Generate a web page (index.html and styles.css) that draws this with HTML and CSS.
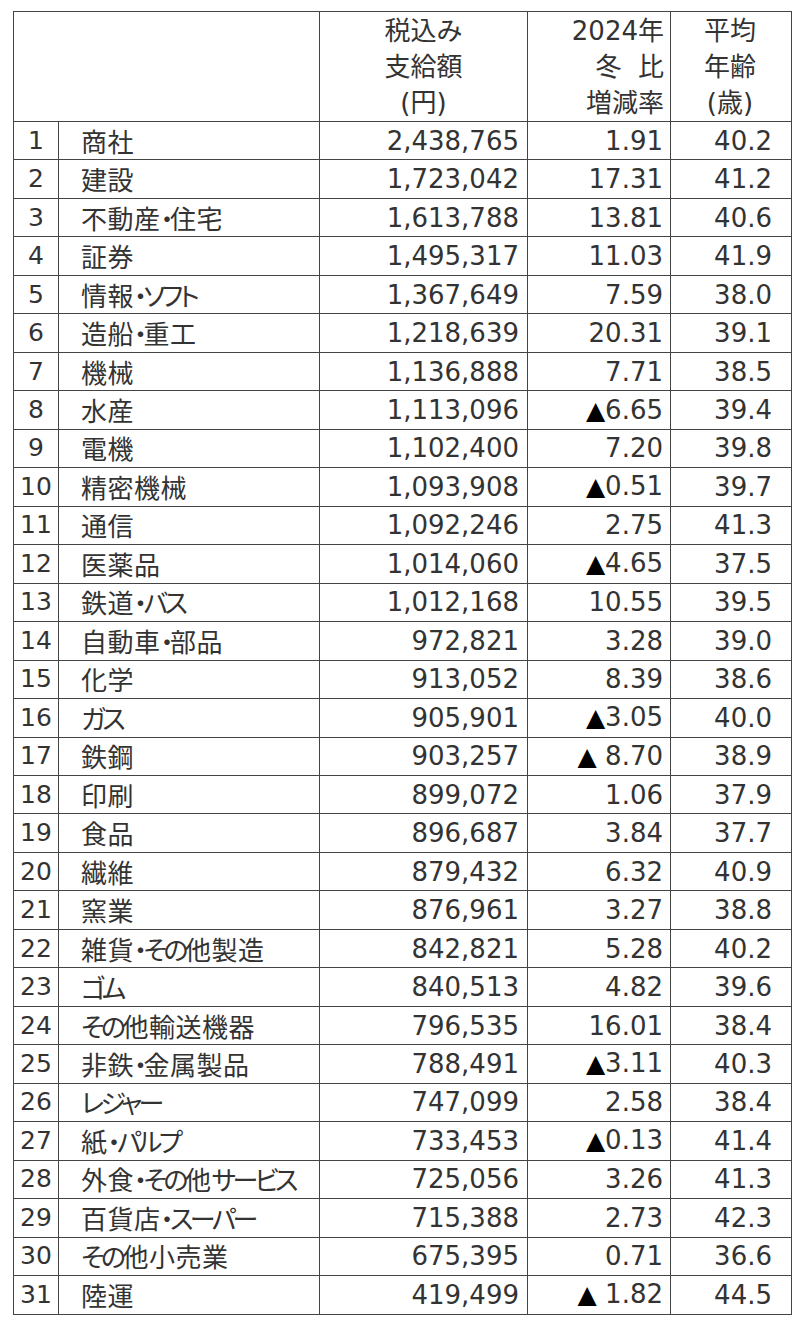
FILE: index.html
```html
<!DOCTYPE html>
<html lang="ja">
<head>
<meta charset="utf-8">
<title>業種別 税込み支給額</title>
<link rel="stylesheet" href="styles.css">
</head>
<body>
<table class="bonus">
  <colgroup>
    <col class="c-rank"><col class="c-name"><col class="c-amt"><col class="c-rate"><col class="c-age">
  </colgroup>
  <thead>
    <tr class="head">
      <th colspan="2"></th>
      <th class="h-amt">税込み<br>支給額<br>(円)</th>
      <th class="h-rate">2024年<br>冬&nbsp;&nbsp;比<br>増減率</th>
      <th class="h-age">平均<br>年齢<br>(歳)</th>
    </tr>
  </thead>
  <tbody>
    <tr><td class="rank">1</td><td class="name">商社</td><td class="amt">2,438,765</td><td class="rate">1.91</td><td class="age">40.2</td></tr>
    <tr><td class="rank">2</td><td class="name">建設</td><td class="amt">1,723,042</td><td class="rate">17.31</td><td class="age">41.2</td></tr>
    <tr><td class="rank">3</td><td class="name">不動産<span class="k">・</span>住宅</td><td class="amt">1,613,788</td><td class="rate">13.81</td><td class="age">40.6</td></tr>
    <tr><td class="rank">4</td><td class="name">証券</td><td class="amt">1,495,317</td><td class="rate">11.03</td><td class="age">41.9</td></tr>
    <tr><td class="rank">5</td><td class="name">情報<span class="k">・ソフト</span></td><td class="amt">1,367,649</td><td class="rate">7.59</td><td class="age">38.0</td></tr>
    <tr><td class="rank">6</td><td class="name">造船<span class="k">・</span>重工</td><td class="amt">1,218,639</td><td class="rate">20.31</td><td class="age">39.1</td></tr>
    <tr><td class="rank">7</td><td class="name">機械</td><td class="amt">1,136,888</td><td class="rate">7.71</td><td class="age">38.5</td></tr>
    <tr><td class="rank">8</td><td class="name">水産</td><td class="amt">1,113,096</td><td class="rate"><span class="tri">▲</span>6.65</td><td class="age">39.4</td></tr>
    <tr><td class="rank">9</td><td class="name">電機</td><td class="amt">1,102,400</td><td class="rate">7.20</td><td class="age">39.8</td></tr>
    <tr><td class="rank">10</td><td class="name">精密機械</td><td class="amt">1,093,908</td><td class="rate"><span class="tri">▲</span>0.51</td><td class="age">39.7</td></tr>
    <tr><td class="rank">11</td><td class="name">通信</td><td class="amt">1,092,246</td><td class="rate">2.75</td><td class="age">41.3</td></tr>
    <tr><td class="rank">12</td><td class="name">医薬品</td><td class="amt">1,014,060</td><td class="rate"><span class="tri">▲</span>4.65</td><td class="age">37.5</td></tr>
    <tr><td class="rank">13</td><td class="name">鉄道<span class="k">・バス</span></td><td class="amt">1,012,168</td><td class="rate">10.55</td><td class="age">39.5</td></tr>
    <tr><td class="rank">14</td><td class="name">自動車<span class="k">・</span>部品</td><td class="amt">972,821</td><td class="rate">3.28</td><td class="age">39.0</td></tr>
    <tr><td class="rank">15</td><td class="name">化学</td><td class="amt">913,052</td><td class="rate">8.39</td><td class="age">38.6</td></tr>
    <tr><td class="rank">16</td><td class="name"><span class="k">ガス</span></td><td class="amt">905,901</td><td class="rate"><span class="tri">▲</span>3.05</td><td class="age">40.0</td></tr>
    <tr><td class="rank">17</td><td class="name">鉄鋼</td><td class="amt">903,257</td><td class="rate"><span class="tri">▲</span> 8.70</td><td class="age">38.9</td></tr>
    <tr><td class="rank">18</td><td class="name">印刷</td><td class="amt">899,072</td><td class="rate">1.06</td><td class="age">37.9</td></tr>
    <tr><td class="rank">19</td><td class="name">食品</td><td class="amt">896,687</td><td class="rate">3.84</td><td class="age">37.7</td></tr>
    <tr><td class="rank">20</td><td class="name">繊維</td><td class="amt">879,432</td><td class="rate">6.32</td><td class="age">40.9</td></tr>
    <tr><td class="rank">21</td><td class="name">窯業</td><td class="amt">876,961</td><td class="rate">3.27</td><td class="age">38.8</td></tr>
    <tr><td class="rank">22</td><td class="name">雑貨<span class="k">・その</span>他製造</td><td class="amt">842,821</td><td class="rate">5.28</td><td class="age">40.2</td></tr>
    <tr><td class="rank">23</td><td class="name"><span class="k">ゴム</span></td><td class="amt">840,513</td><td class="rate">4.82</td><td class="age">39.6</td></tr>
    <tr><td class="rank">24</td><td class="name"><span class="k">その</span>他輸送機器</td><td class="amt">796,535</td><td class="rate">16.01</td><td class="age">38.4</td></tr>
    <tr><td class="rank">25</td><td class="name">非鉄<span class="k">・</span>金属製品</td><td class="amt">788,491</td><td class="rate"><span class="tri">▲</span>3.11</td><td class="age">40.3</td></tr>
    <tr><td class="rank">26</td><td class="name"><span class="k">レジャー</span></td><td class="amt">747,099</td><td class="rate">2.58</td><td class="age">38.4</td></tr>
    <tr><td class="rank">27</td><td class="name">紙<span class="k">・パルプ</span></td><td class="amt">733,453</td><td class="rate"><span class="tri">▲</span>0.13</td><td class="age">41.4</td></tr>
    <tr><td class="rank">28</td><td class="name">外食<span class="k">・その</span>他<span class="k">サービス</span></td><td class="amt">725,056</td><td class="rate">3.26</td><td class="age">41.3</td></tr>
    <tr><td class="rank">29</td><td class="name">百貨店<span class="k">・スーパー</span></td><td class="amt">715,388</td><td class="rate">2.73</td><td class="age">42.3</td></tr>
    <tr><td class="rank">30</td><td class="name"><span class="k">その</span>他小売業</td><td class="amt">675,395</td><td class="rate">0.71</td><td class="age">36.6</td></tr>
    <tr><td class="rank">31</td><td class="name">陸運</td><td class="amt">419,499</td><td class="rate"><span class="tri">▲</span> 1.82</td><td class="age">44.5</td></tr>
  </tbody>
</table>
</body>
</html>
```

FILE: styles.css
```css
html, body {
  margin: 0;
  padding: 0;
  background: #fff;
}

body {
  padding: 11px 0 0 13px;
  font-family: "DejaVu Sans", "Noto Sans CJK JP", sans-serif;
  font-size: 26px;
  color: #333;
}

.bonus {
  border-collapse: collapse;
  table-layout: fixed;
  width: 778px;
}

.c-rank { width: 45px; }
.c-name { width: 261px; }
.c-amt { width: 208px; }
.c-rate { width: 143px; }
.c-age { width: 121px; }

.bonus th,
.bonus td {
  border: 1px solid #444;
  padding: 0;
  white-space: nowrap;
  overflow: hidden;
  font-weight: normal;
}

.head th {
  height: 109px;
  line-height: 36px;
  vertical-align: middle;
}

.h-amt { text-align: center; }
.h-rate { text-align: right; padding-right: 6px !important; }
.h-age { text-align: center; padding-right: 2px !important; }

.bonus tbody td {
  height: 37.48px;
  line-height: 34px;
  vertical-align: middle;
}

.rank {
  text-align: center;
  font-size: 25px;
}

.name {
  padding-left: 22px !important;
  font-family: "Noto Sans CJK JP", sans-serif;
  font-feature-settings: "palt";
  letter-spacing: 0.5px;
}

.k {
  letter-spacing: -3.5px;
}

.amt {
  text-align: right;
  padding-right: 8px !important;
}

.rate {
  text-align: right;
  padding-right: 7px !important;
}

.age {
  text-align: right;
  padding-right: 19px !important;
}

.tri {
  color: #000;
  font-size: 25px;
}
```
